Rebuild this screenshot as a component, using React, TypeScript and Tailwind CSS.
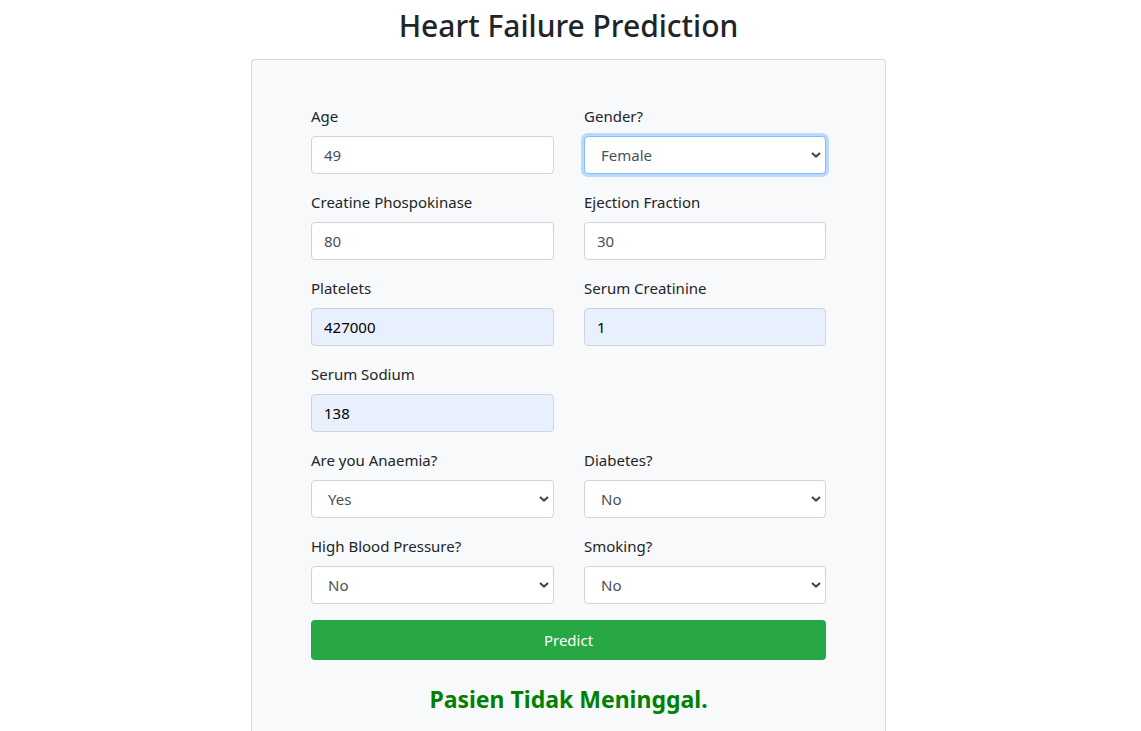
const font = { fontFamily: '"Noto Sans", "Open Sans", Arial, sans-serif' }

function Chevron() {
  return (
    <svg
      viewBox="0 0 10 6"
      className="pointer-events-none absolute right-[5px] top-1/2 h-[6px] w-[10px] -translate-y-1/2"
    >
      <path d="M1 1l4 3.6L9 1" fill="none" stroke="#444" strokeWidth="2" />
    </svg>
  )
}

function TextField({ label, value, filled }: { label: string; value: string; filled?: boolean }) {
  return (
    <div className="mb-4 flex flex-col">
      <label className="mb-2 text-[15px] leading-6 text-[#212529]">{label}</label>
      <input
        readOnly
        value={value}
        className={
          filled
            ? 'h-[38px] rounded-[4px] border border-[#ced4da] bg-[#e8f0fe] px-3 text-[15px] text-black outline-none'
            : 'h-[38px] rounded-[4px] border border-[#ced4da] bg-white px-3 text-[15px] text-[#495057] outline-none'
        }
      />
    </div>
  )
}

function SelectField({ label, value, focused }: { label: string; value: string; focused?: boolean }) {
  return (
    <div className="mb-4 flex flex-col">
      <label className="mb-2 text-[15px] leading-6 text-[#212529]">{label}</label>
      <div className="relative">
        <div
          className={
            focused
              ? 'flex h-[38px] items-center rounded-[4px] border border-[#80bdff] bg-white pl-4 text-[15px] text-[#495057] shadow-[0_0_0_3px_rgba(0,123,255,0.25)]'
              : 'flex h-[38px] items-center rounded-[4px] border border-[#ced4da] bg-white pl-4 text-[15px] text-[#495057]'
          }
        >
          {value}
        </div>
        <Chevron />
      </div>
    </div>
  )
}

export default function App() {
  return (
    <div className="min-h-screen bg-white pr-1" style={font}>
      <h1 className="pt-[7px] text-center text-[30px] font-medium leading-[38px] text-[#212529]">
        Heart Failure Prediction
      </h1>
      <div className="mx-auto mt-[14px] w-[635px] rounded-t-[4px] border border-b-0 border-[rgba(0,0,0,0.125)] bg-[#f8f9fa] px-[59px] pb-10 pt-[44px]">
        <div className="grid grid-cols-[243px_242px] gap-x-[30px]">
          <TextField label="Age" value="49" />
          <SelectField label="Gender?" value="Female" focused />
          <TextField label="Creatine Phospokinase" value="80" />
          <TextField label="Ejection Fraction" value="30" />
          <TextField label="Platelets" value="427000" filled />
          <TextField label="Serum Creatinine" value="1" filled />
          <TextField label="Serum Sodium" value="138" filled />
          <div />
          <SelectField label="Are you Anaemia?" value="Yes" />
          <SelectField label="Diabetes?" value="No" />
          <SelectField label="High Blood Pressure?" value="No" />
          <SelectField label="Smoking?" value="No" />
        </div>
        <button
          type="button"
          className="h-10 w-full rounded-[4px] bg-[#28a745] text-[15px] text-white"
        >
          Predict
        </button>
        <h4 className="mt-[25px] text-center text-[23px] font-bold leading-[29px] text-[#008000]">
          Pasien Tidak Meninggal.
        </h4>
      </div>
    </div>
  )
}
